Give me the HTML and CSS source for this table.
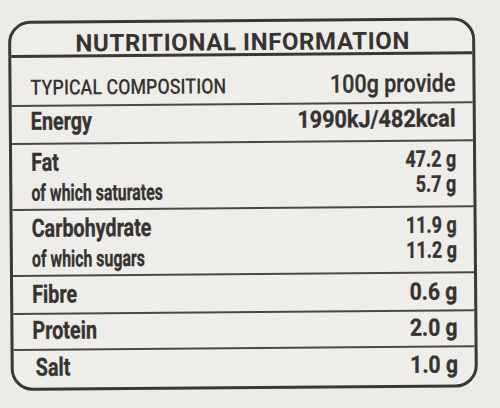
FILE: index.html
```html
<!DOCTYPE html>
<html>
<head>
<meta charset="utf-8">
<link rel="stylesheet" href="styles.css">
</head>
<body>
<div class="label">
  <div class="title">NUTRITIONAL INFORMATION</div>
  <div class="row head"><span class="name">TYPICAL COMPOSITION</span><span class="val">100g provide</span></div>
  <div class="row energy"><span class="name">Energy</span><span class="val">1990kJ/482kcal</span></div>
  <div class="row group fat">
    <div class="names"><span class="name">Fat</span><span class="name sub">of which saturates</span></div>
    <div class="vals"><span class="val">47.2 g</span><span class="val">5.7 g</span></div>
  </div>
  <div class="row group carb">
    <div class="names"><span class="name">Carbohydrate</span><span class="name sub">of which sugars</span></div>
    <div class="vals"><span class="val">11.9 g</span><span class="val">11.2 g</span></div>
  </div>
  <div class="row single fibre"><span class="name">Fibre</span><span class="val">0.6 g</span></div>
  <div class="row single protein"><span class="name">Protein</span><span class="val">2.0 g</span></div>
  <div class="row single salt"><span class="name">Salt</span><span class="val">1.0 g</span></div>
</div>
</body>
</html>
```

FILE: styles.css
```css
html, body {
  margin: 0;
  padding: 0;
}
body {
  width: 500px;
  height: 408px;
  overflow: hidden;
  background: #ecebe6;
  font-family: Roboto, "Liberation Sans", sans-serif;
  color: #363431;
}
.label {
  box-sizing: border-box;
  margin: 21px 0 0 8px;
  width: 467px;
  height: 370px;
  border: 3px solid #3a3835;
  border-radius: 22px;
  background: #efede9;
  transform: rotate(-0.45deg);
  transform-origin: left top;
  display: flex;
  flex-direction: column;
}
.title {
  box-sizing: border-box;
  height: 34px;
  padding-top: 2px;
  border-bottom: 3px solid #3a3835;
  font-weight: 700;
  font-size: 24px;
  line-height: 36px;
  text-align: center;
  letter-spacing: 0.6px;
  padding-left: 2px;
}
.row {
  box-sizing: border-box;
  display: flex;
  justify-content: space-between;
  align-items: baseline;
  padding: 0 17px 0 19px;
  border-bottom: 2px solid #4a4845;
  font-weight: 700;
  font-size: 25px;
  line-height: 26px;
}
.name, .val {
  display: inline-block;
  white-space: nowrap;
  -webkit-text-stroke: 0.35px currentColor;
}
.name {
  transform: scaleX(0.79);
  transform-origin: left center;
}
.val {
  font-size: 23px;
  transform: scaleX(0.78);
  transform-origin: right center;
}
.head {
  height: 49px;
  padding-top: 16px;
}
.head .name {
  font-weight: 500;
  font-size: 21px;
  transform: scaleX(0.85);
  -webkit-text-stroke: 0;
}
.head .val {
  font-size: 25px;
  font-weight: 500;
  transform: scaleX(0.86);
}
.energy {
  height: 38px;
  padding-top: 2px;
}
.energy .val {
  font-size: 24px;
  transform: scaleX(0.9);
}
.group {
  height: 66px;
  padding-top: 4px;
  align-items: flex-start;
}
.names {
  display: flex;
  flex-direction: column;
  align-items: flex-start;
}
.names .name {
  line-height: 28px;
}
.names .sub {
  font-size: 23px;
  line-height: 33px;
  transform: scaleX(0.69);
}
.vals {
  display: flex;
  flex-direction: column;
  align-items: flex-end;
  padding-top: 1px;
}
.vals .val {
  line-height: 25px;
}
.single .val {
  font-size: 24px;
  transform: scaleX(0.88);
}
.fibre {
  height: 38px;
  padding-top: 5px;
}
.protein {
  height: 36px;
  padding-top: 3px;
}
.salt {
  flex: 1;
  border-bottom: none;
  padding-top: 4px;
  padding-left: 22px;
}
```
